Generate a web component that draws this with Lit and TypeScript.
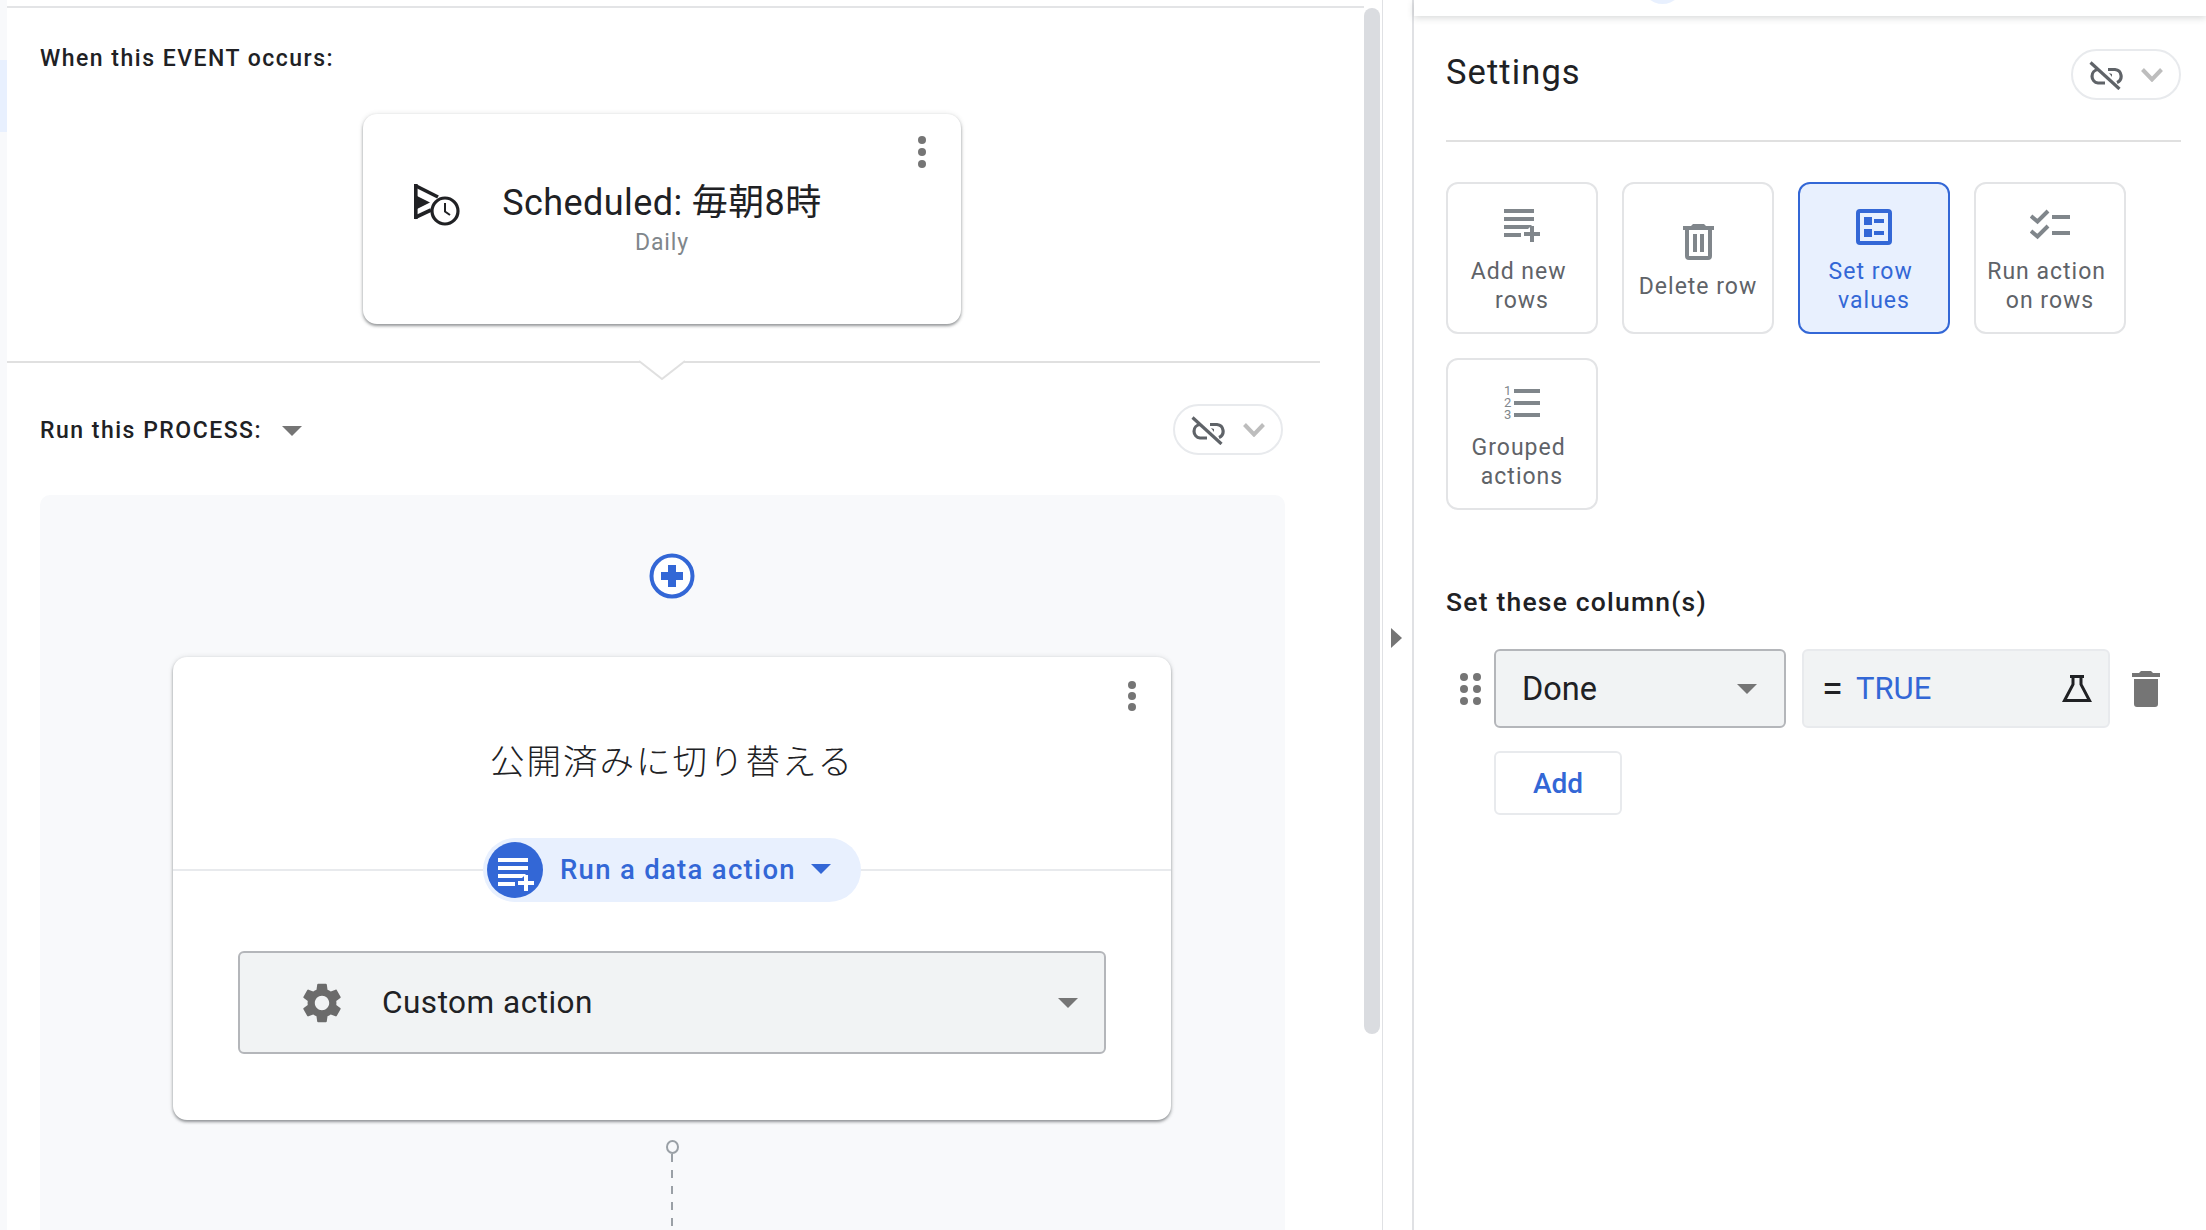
import { LitElement, html, css, svg, unsafeCSS } from 'lit';
import { customElement } from 'lit/decorators.js';

const BLUE = unsafeCSS('#3367d6');

const playlistPath = 'M0 0h30v4H0z M0 8h30v4H0z M0 16h28l-4 4H0z M0 24h17v4H0z M26 17h4v6h6v4h-6v6h-4v-6h-6v-4h6z';

const icons = {
  playlist: svg`<svg width="36" height="36" viewBox="0 0 36 36"><path fill="currentColor" d=${playlistPath}/></svg>`,
  trash: svg`<svg width="31" height="36" viewBox="0 0 31 36"><path fill="currentColor" d="M10 0h11l2 2h8v4H0V2h8z"/><path fill="none" stroke="currentColor" stroke-width="4" stroke-linejoin="round" d="M4 5v27a2 2 0 0 0 2 2h19a2 2 0 0 0 2-2V5"/><path fill="currentColor" d="M10 10h4v18h-4z M17 10h4v18h-4z"/></svg>`,
  rowValues: svg`<svg width="36" height="36" viewBox="0 0 36 36"><rect x="2" y="2" width="32" height="32" rx="2" fill="none" stroke="currentColor" stroke-width="4"/><path fill="currentColor" d="M8 8h8v8H8z M8 20h8v8H8z M18 10h10v4H18z M18 22h10v4H18z"/></svg>`,
  checks: svg`<svg width="40" height="36" viewBox="0 0 40 36"><g fill="none" stroke="currentColor" stroke-width="4"><path d="M1 7l6.5 5.5L18 2"/><path d="M1 22l6.5 5.5L18 17"/></g><path fill="currentColor" d="M22 6h18v4H22z M22 22h18v4H22z"/></svg>`,
  unlink: svg`<svg width="34" height="30" viewBox="0 0 34 30"><g fill="none" stroke="#5f6368" stroke-width="3.2"><path d="M9 9.5a6.8 6.8 0 0 0 0 13.5h7"/><path d="M19 9.5h7a6.8 6.8 0 0 1 2 13"/><path d="M1.5 2.5l29 26.5"/></g><path fill="#5f6368" d="M20 13l3 1v3z"/></svg>`,
  chevron: svg`<svg width="22" height="14" viewBox="0 0 22 14"><path fill="none" stroke="#bdbdbd" stroke-width="4" d="M1.5 1.5L11 11.5l9.5-10"/></svg>`,
  scheduled: svg`<svg width="46" height="44" viewBox="0 0 46 44"><g fill="none" stroke="#202124"><path stroke-width="3.6" d="M1.8 0v35"/><path stroke-width="3.6" d="M1 1.5l23 11.5"/><path stroke-width="3.6" d="M1 33.5l16-7.5"/><circle stroke-width="3.2" cx="31" cy="27" r="13"/><path stroke-width="2" d="M31 19v8.5l5 3.5"/></g><path fill="#202124" d="M3 12l13 6.5L3 25z"/></svg>`,
  gear: svg`<svg width="48" height="48" viewBox="0 0 24 24"><path fill="#6b6b6b" d="M19.14 12.94c.04-.3.06-.61.06-.94 0-.32-.02-.64-.07-.94l2.03-1.58c.18-.14.23-.41.12-.61l-1.92-3.32c-.12-.22-.37-.29-.59-.22l-2.39.96c-.5-.38-1.03-.7-1.62-.94l-.36-2.54c-.04-.24-.24-.41-.48-.41h-3.84c-.24 0-.43.17-.47.41l-.36 2.54c-.59.24-1.13.57-1.62.94l-2.39-.96c-.22-.08-.47 0-.59.22L2.74 8.87c-.12.21-.08.47.12.61l2.03 1.58c-.05.3-.09.63-.09.94s.02.64.07.94l-2.03 1.58c-.18.14-.23.41-.12.61l1.92 3.32c.12.22.37.29.59.22l2.39-.96c.5.38 1.03.7 1.62.94l.36 2.54c.05.24.24.41.48.41h3.84c.24 0 .44-.17.47-.41l.36-2.54c.59-.24 1.13-.56 1.62-.94l2.39.96c.22.08.47 0 .59-.22l1.92-3.32c.12-.22.07-.47-.12-.61l-2.01-1.58zM12 15.6c-1.98 0-3.6-1.62-3.6-3.6s1.62-3.6 3.6-3.6 3.6 1.62 3.6 3.6-1.62 3.6-3.6 3.6z"/></svg>`,
  plus: svg`<svg width="46" height="46" viewBox="0 0 46 46"><circle cx="23" cy="23" r="20.5" fill="#fff" stroke="#3367d6" stroke-width="4"/><path fill="#3367d6" d="M19 12h8v7h7v8h-7v7h-8v-7h-7v-8h7z"/></svg>`,
  flask: svg`<svg width="30" height="28" viewBox="0 0 30 28"><path fill="none" stroke="#202124" stroke-width="3" d="M8 1.5h14 M11 1.5v8L2.5 25.5h25L19 9.5v-8"/></svg>`,
  bin: svg`<svg width="28" height="36" viewBox="0 0 28 36"><path fill="#757575" d="M9 0h10l2 2h7v4H0V2h7z M2 8h24v25a3 3 0 0 1-3 3H5a3 3 0 0 1-3-3z"/></svg>`,
  notch: svg`<svg class="notch" width="48" height="22" viewBox="0 0 48 22"><path fill="#fff" stroke="#e0e0e0" stroke-width="2" d="M1 1l23 18L47 1"/></svg>`,
};

const numberedIcon = html`
  <div class="num-icon">
    ${['1', '2', '3'].map((n) => html`<span>${n}</span><i></i>`)}
  </div>
`;

@customElement('app-root')
export class AppRoot extends LitElement {
  static override styles = css`
    :host {
      display: block;
      width: 2206px;
      height: 1230px;
      overflow: hidden;
      background: #fff;
      font-family: Roboto, 'Noto Sans CJK JP', sans-serif;
      color: #202124;
    }

    .root {
      display: flex;
      height: 1230px;
    }

    /* left rail */
    .rail {
      width: 7px;
      flex: none;
      background: #f8f9fb;
      padding-top: 60px;
      box-sizing: border-box;
    }

    .rail-mark {
      height: 72px;
      background: #e8f0fe;
    }

    /* editor column */
    .editor {
      width: 1357px;
      flex: none;
      margin-top: 6px;
      border-top: 2px solid #e3e4e6;
      box-sizing: border-box;
    }

    .section-label {
      font-size: 23px;
      font-weight: 500;
      letter-spacing: 1.5px;
      line-height: 30px;
    }

    .event {
      width: 1313px;
      height: 355px;
      box-sizing: border-box;
      padding: 36px 0 0 33px;
      border-bottom: 2px solid #e0e0e0;
      position: relative;
    }

    .notch {
      position: absolute;
      left: 631px;
      bottom: -21px;
    }

    .card {
      background: #fff;
      border-radius: 14px;
      box-sizing: border-box;
      position: relative;
      box-shadow: 0 2px 3px rgba(60, 64, 67, 0.5), 0 0 5px rgba(60, 64, 67, 0.15);
    }

    .event .card {
      width: 598px;
      height: 210px;
      margin: 40px 0 0 323px;
      padding-top: 67px;
      text-align: center;
    }

    .kebab {
      position: absolute;
      display: grid;
      gap: 4px;
    }

    .kebab i {
      width: 8px;
      height: 8px;
      border-radius: 50%;
      background: #757575;
    }

    .event .kebab {
      left: 555px;
      top: 22px;
    }

    .sched-icon {
      position: absolute;
      left: 51px;
      top: 70px;
    }

    .title {
      font-size: 36px;
      line-height: 44px;
      letter-spacing: 0.4px;
    }

    .sub {
      font-size: 23px;
      line-height: 30px;
      letter-spacing: 0.9px;
      color: #80868b;
      margin-top: 3px;
    }

    .process {
      padding: 0 0 0 33px;
    }

    .process-head {
      width: 1243px;
      height: 132px;
      display: flex;
      align-items: flex-start;
      padding-top: 41px;
      box-sizing: border-box;
    }

    .process-head .section-label {
      margin-top: 12px;
    }

    .caret {
      width: 0;
      height: 0;
      border-left: 10px solid transparent;
      border-right: 10px solid transparent;
      border-top: 10px solid #757575;
    }

    .process-head .caret {
      margin: 22px 0 0 20px;
    }

    .pill {
      width: 110px;
      height: 51px;
      box-sizing: border-box;
      border: 2px solid #e8eaed;
      border-radius: 26px;
      display: flex;
      align-items: center;
      padding-left: 16px;
      gap: 18px;
      background: #fff;
    }

    .process-head .pill {
      margin-left: auto;
    }

    .canvas {
      width: 1245px;
      height: 735px;
      background: #f8f9fb;
      border-radius: 10px 10px 0 0;
      box-sizing: border-box;
      padding: 58px 114px 0 133px;
    }

    .plus {
      display: flex;
      justify-content: center;
      height: 46px;
    }

    .canvas .card {
      height: 463px;
      margin-top: 58px;
      text-align: center;
      padding-top: 82px;
    }

    .canvas .kebab {
      right: 35px;
      top: 24px;
      gap: 3px;
    }

    .jp-title {
      font-size: 34.5px;
      font-weight: 300;
      line-height: 46px;
      letter-spacing: 2px;
    }

    .chip-row {
      position: relative;
      display: flex;
      justify-content: center;
      margin-top: 53px;
    }

    .chip-row::before {
      content: '';
      position: absolute;
      left: 0;
      right: 0;
      top: 31px;
      height: 2px;
      background: #e8eaed;
    }

    .chip {
      position: relative;
      display: flex;
      align-items: center;
      width: 378px;
      height: 64px;
      box-sizing: border-box;
      padding: 0 0 2px 4px;
      background: #e8f0fe;
      border-radius: 32px;
      color: ${BLUE};
      font-size: 27.5px;
      font-weight: 500;
      letter-spacing: 1.3px;
    }

    .chip-icon {
      width: 56px;
      height: 56px;
      margin-bottom: -2px;
      border-radius: 50%;
      background: ${BLUE};
      color: #fff;
      display: flex;
      align-items: center;
      justify-content: center;
      margin-right: 17px;
    }

    .chip-icon svg {
      margin: 12px 0 0 2px;
    }

    .chip .caret {
      margin-left: 15px;
      border-top-color: ${BLUE};
    }

    .select {
      display: flex;
      align-items: center;
      box-sizing: border-box;
      background: #f1f3f4;
      border: 2px solid #b4b6ba;
      border-radius: 6px;
    }

    .action-select {
      width: 868px;
      height: 103px;
      margin: 49px 0 0 65px;
      padding: 0 26px 0 58px;
      font-size: 31.5px;
      letter-spacing: 0.5px;
    }

    .action-select span {
      margin-left: 36px;
    }

    .action-select .caret {
      margin-left: auto;
    }

    .pin {
      display: flex;
      flex-direction: column;
      align-items: center;
      margin-top: 20px;
    }

    .pin i {
      width: 13px;
      height: 14px;
      box-sizing: border-box;
      border: 2px solid #9aa0a6;
      border-radius: 50%;
    }

    .pin b {
      width: 2px;
      height: 76px;
      background: repeating-linear-gradient(#9aa0a6 0 8px, transparent 8px 16px);
    }

    /* scrollbar and collapse gutter */
    .scrollbar {
      width: 16px;
      flex: none;
    }

    .thumb {
      margin-top: 8px;
      height: 1026px;
      background: #dadce0;
      border-radius: 8px;
    }

    .gutter {
      width: 29px;
      flex: none;
      margin-left: 2px;
      border-left: 1px solid #e0e1e4;
      border-right: 2px solid #e0e1e4;
      display: flex;
      align-items: center;
      justify-content: center;
    }

    .gutter i {
      width: 0;
      height: 0;
      margin: 46px 3px 0 0;
      border-top: 10px solid transparent;
      border-bottom: 10px solid transparent;
      border-left: 11px solid #757575;
    }

    /* settings column */
    .settings {
      flex: 1;
      min-width: 0;
    }

    .topbar {
      height: 16px;
      box-shadow: 0 2px 7px rgba(60, 64, 67, 0.2);
      overflow: hidden;
    }

    .topbar i {
      display: block;
      width: 41px;
      height: 41px;
      margin: -37px 0 0 228px;
      background: #e8f0fe;
      border-radius: 50%;
    }

    .settings-body {
      padding: 0 25px 0 32px;
    }

    .settings-head {
      height: 126px;
      box-sizing: border-box;
      padding-top: 33px;
      display: flex;
      justify-content: space-between;
      align-items: flex-start;
      border-bottom: 2px solid #e0e0e0;
    }

    .settings-title {
      font-size: 34.5px;
      line-height: 46px;
      letter-spacing: 1.1px;
    }

    .tiles {
      display: grid;
      grid-template-columns: repeat(4, 152px);
      grid-auto-rows: 152px;
      gap: 24px;
      margin-top: 40px;
    }

    .tile {
      box-sizing: border-box;
      border: 2px solid #e3e4e6;
      border-radius: 12px;
      padding-top: 8px;
      display: flex;
      flex-direction: column;
      align-items: center;
      justify-content: center;
      color: #80868b;
    }

    .tile.on {
      border-color: ${BLUE};
      background: #e8f0fe;
      color: ${BLUE};
    }

    .num-icon {
      display: grid;
      grid-template-columns: 10px 26px;
      grid-auto-rows: 12px;
      align-items: center;
      height: 36px;
      font-size: 13px;
      line-height: 12px;
    }

    .num-icon i {
      height: 4px;
      background: currentColor;
    }

    .tile-label {
      margin-top: 12px;
      font-size: 23px;
      line-height: 29px;
      letter-spacing: 1px;
      text-align: center;
      color: #5f6368;
      white-space: nowrap;
    }

    .tile.on .tile-label {
      color: ${BLUE};
    }

    .columns-label {
      margin-top: 74px;
      font-size: 26.5px;
      font-weight: 500;
      line-height: 36px;
      letter-spacing: 1.2px;
    }

    .col-row {
      display: flex;
      align-items: center;
      margin-top: 29px;
      height: 79px;
    }

    .dots {
      display: grid;
      grid-template-columns: 8px 8px;
      gap: 4px 5px;
      margin: 0 13px 0 14px;
    }

    .dots i {
      width: 8px;
      height: 8px;
      border-radius: 50%;
      background: #757575;
    }

    .col-select {
      width: 292px;
      height: 79px;
      padding: 0 27px 0 26px;
      font-size: 32.5px;
    }

    .col-select .caret {
      margin-left: auto;
    }

    .formula {
      width: 308px;
      height: 79px;
      margin-left: 16px;
      box-sizing: border-box;
      background: #f1f3f4;
      border: 2px solid #e8eaed;
      border-radius: 6px;
      display: flex;
      align-items: center;
      padding: 0 16px 0 18px;
      font-size: 31px;
    }

    .formula .eq {
      width: 34px;
      font-size: 38px;
      line-height: 36px;
    }

    .formula .val {
      color: ${BLUE};
    }

    .formula svg {
      margin-left: auto;
    }

    .bin {
      margin-left: 22px;
      height: 36px;
    }

    .add {
      width: 128px;
      height: 64px;
      margin: 23px 0 0 48px;
      box-sizing: border-box;
      display: flex;
      align-items: center;
      justify-content: center;
      background: #fff;
      border: 2px solid #e8eaed;
      border-radius: 6px;
      color: ${BLUE};
      font-size: 28px;
      font-weight: 500;
    }
  `;

  private renderPill() {
    return html`<div class="pill">${icons.unlink}${icons.chevron}</div>`;
  }

  private renderKebab() {
    return html`<div class="kebab"><i></i><i></i><i></i></div>`;
  }

  private renderTile(icon: unknown, lines: string[], on = false) {
    return html`
      <div class="tile ${on ? 'on' : ''}">
        ${icon}
        <div class="tile-label">
          ${lines.length > 1 ? html`${lines[0]}&nbsp;<br />${lines[1]}` : lines[0]}
        </div>
      </div>
    `;
  }

  override render() {
    return html`
      <div class="root">
        <div class="rail"><div class="rail-mark"></div></div>

        <div class="editor">
          <div class="event">
            <div class="section-label">When this EVENT occurs:</div>
            <div class="card">
              ${this.renderKebab()}
              <div class="sched-icon">${icons.scheduled}</div>
              <div class="title">Scheduled: 毎朝8時</div>
              <div class="sub">Daily</div>
            </div>
            ${icons.notch}
          </div>

          <div class="process">
            <div class="process-head">
              <div class="section-label">Run this PROCESS:</div>
              <div class="caret"></div>
              ${this.renderPill()}
            </div>

            <div class="canvas">
              <div class="plus">${icons.plus}</div>
              <div class="card">
                ${this.renderKebab()}
                <div class="jp-title">公開済みに切り替える</div>
                <div class="chip-row">
                  <div class="chip">
                    <div class="chip-icon">${icons.playlist}</div>
                    Run a data action
                    <div class="caret"></div>
                  </div>
                </div>
                <div class="select action-select">
                  ${icons.gear}
                  <span>Custom action</span>
                  <div class="caret"></div>
                </div>
              </div>
              <div class="pin"><i></i><b></b></div>
            </div>
          </div>
        </div>

        <div class="scrollbar"><div class="thumb"></div></div>
        <div class="gutter"><i></i></div>

        <div class="settings">
          <div class="topbar"><i></i></div>
          <div class="settings-body">
            <div class="settings-head">
              <div class="settings-title">Settings</div>
              ${this.renderPill()}
            </div>

            <div class="tiles">
              ${this.renderTile(icons.playlist, ['Add new', 'rows'])}
              ${this.renderTile(icons.trash, ['Delete row'])}
              ${this.renderTile(icons.rowValues, ['Set row', 'values'], true)}
              ${this.renderTile(icons.checks, ['Run action', 'on rows'])}
              ${this.renderTile(numberedIcon, ['Grouped', 'actions'])}
            </div>

            <div class="columns-label">Set these column(s)</div>
            <div class="col-row">
              <div class="dots"><i></i><i></i><i></i><i></i><i></i><i></i></div>
              <div class="select col-select">
                Done
                <div class="caret"></div>
              </div>
              <div class="formula">
                <span class="eq">=</span>
                <span class="val">TRUE</span>
                ${icons.flask}
              </div>
              <div class="bin">${icons.bin}</div>
            </div>
            <div class="add">Add</div>
          </div>
        </div>
      </div>
    `;
  }
}
